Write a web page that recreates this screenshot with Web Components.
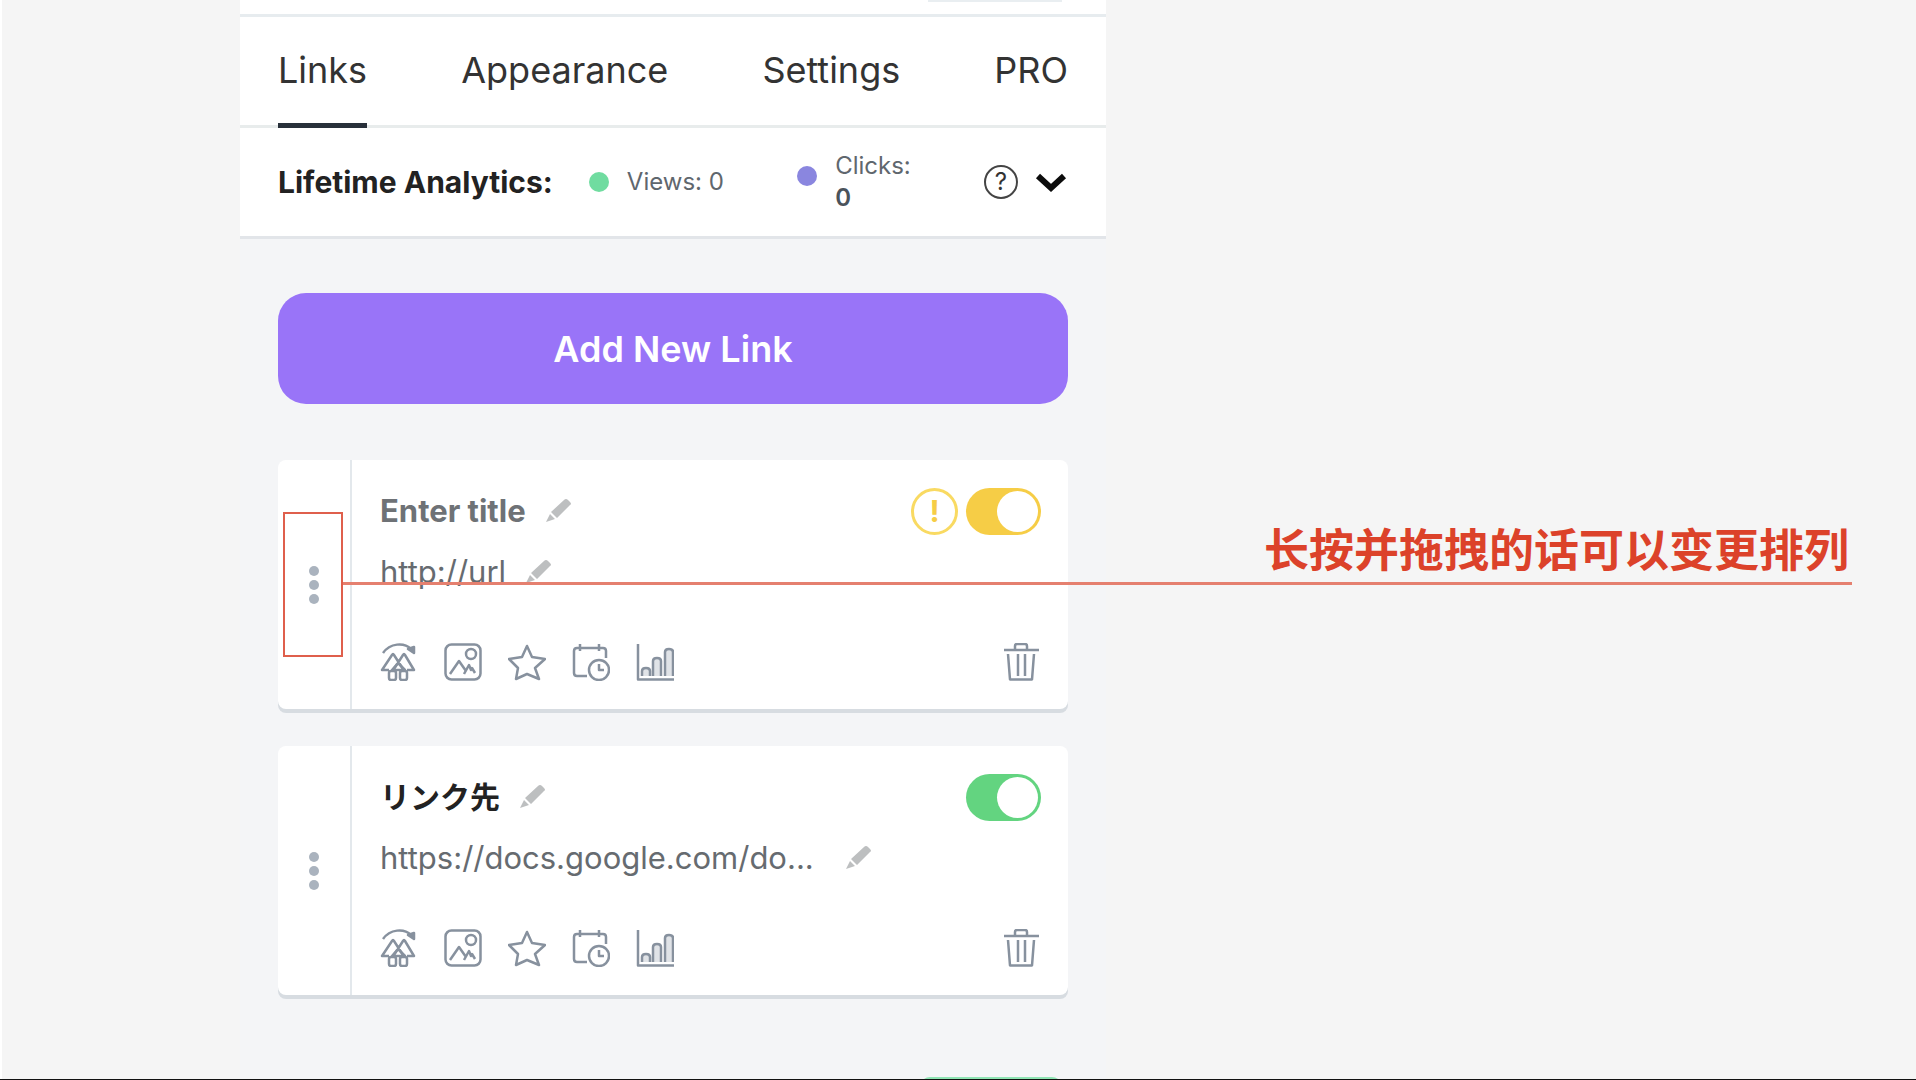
<!DOCTYPE html>
<html lang="zh">
<head>
<meta charset="UTF-8">
<title>Links</title>
<style>
    body {
        margin: 0;
        background: #f5f5f5;
        font-family: Inter, "Noto Sans CJK JP", sans-serif;
    }
</style>
</head>
<body>
<links-page>
    <tab-bar slot="header"></tab-bar>
    <analytics-bar slot="header"></analytics-bar>
    <add-button>Add New Link</add-button>
    <link-card state="warning">
        <span slot="title">Enter title</span>
        <span slot="url">http://url</span>
    </link-card>
    <link-card state="active">
        <span slot="title" lang="ja">リンク先</span>
        <span slot="url">https://docs.google.com/do...</span>
    </link-card>
    <drag-hint slot="hint">长按并拖拽的话可以变更排列</drag-hint>
</links-page>

<script>
const icons = {
    tree: `<path d="M3 10C10 0 24-1 31 6"/><path d="M28 6l6-2v6z" fill="currentColor"/><path d="M9 27H2L12 12q1-2 2 0l9 14M27 27h7L25 12q-1-2-2 0l-9 14"/><path d="M18 20l-6 7h13z"/><rect x="9" y="28" width="7" height="9" rx="2"/><rect x="20" y="28" width="7" height="9" rx="2"/>`,
    image: `<rect x="1.5" y="1.5" width="35" height="35" rx="6"/><circle cx="27" cy="11" r="5"/><path d="M6 31l9-13 7 10M20 31l5-9 2 5 1-2 3 5"/>`,
    star: `<path d="M19 3l5 11 13 2-10 9 4 11-12-5-11 5 2-11-9-9 13-2z"/>`,
    schedule: `<path d="M15 33H5q-3 0-3-3V8q0-3 3-3h26q3 0 3 3v7M8 1v7M27 1v7"/><circle cx="27" cy="27" r="10"/><path d="M27 21v6h5"/>`,
    chart: `<path d="M2 1v35.5h36"/><g fill="#e0e3e7"><path d="M6 33v-5q0-3 4-3t4 3v5M17 33V18q0-3 4-3t4 3v15M29 33V9q0-3 4-3t4 3v24"/></g>`,
    trash: `<path d="M1 7h35M12 7V3q0-2 2-2h8q2 0 2 2v4M5 11l2 25.5h22l2-25.5M15 11v22M22 11v22"/>`
};

function icon(name) {
    return `<svg width="38" height="38" viewBox="0 0 38 38" fill="none" stroke="currentColor" stroke-width="2.5" stroke-linejoin="round" aria-hidden="true">${icons[name]}</svg>`;
}

class LinksPage extends HTMLElement {
    constructor() {
        super();
        this.attachShadow({ mode: "open" });
        this.shadowRoot.innerHTML = `
            <style>
                :host {
                    display: grid;
                    grid-template-columns: 240fr 866fr 810fr;
                    box-sizing: border-box;
                    height: 100vh;
                    overflow: hidden;
                    position: relative;
                    box-shadow: inset 2px 0 0 #fff;
                    border-bottom: 1px solid #111;
                }
                .panel {
                    grid-column: 2;
                    background: #f4f5f7;
                }
                header { background: #fff; }
                .share {
                    height: 14px;
                    padding: 0 44px;
                    border-bottom: 3px solid #e7ecef;
                }
                .share::after {
                    content: "";
                    display: block;
                    width: 134px;
                    height: 2px;
                    margin-left: auto;
                    background: #e9eef1;
                }
                main {
                    display: flex;
                    flex-direction: column;
                    padding: 54px 38px 0;
                }
                .next {
                    align-self: flex-end;
                    width: 142px;
                    height: 48px;
                    margin: 82px 6px 0 0;
                    border-radius: 10px;
                    background: #8fe5b4;
                }
            </style>
            <div class="panel">
                <header>
                    <div class="share"></div>
                    <slot name="header"></slot>
                </header>
                <main>
                    <slot></slot>
                    <div class="next"></div>
                </main>
            </div>
            <slot name="hint"></slot>
        `;
    }
}

class TabBar extends HTMLElement {
    constructor() {
        super();
        this.attachShadow({ mode: "open" });
        this.shadowRoot.innerHTML = `
            <style>
                :host { display: block; }
                nav {
                    display: flex;
                    justify-content: space-between;
                    padding: 0 38px;
                    border-bottom: 3px solid #e8ecec;
                }
                a {
                    margin-bottom: -3px;
                    border-bottom: 5px solid transparent;
                    color: #333;
                    font-size: 36px;
                    line-height: 106px;
                    text-decoration: none;
                }
                a[aria-current] { border-color: #28303a; }
            </style>
            <nav>
                <a href="#links" aria-current="page">Links</a>
                <a href="#appearance">Appearance</a>
                <a href="#settings">Settings</a>
                <a href="#pro">PRO</a>
            </nav>
        `;
    }
}

class AnalyticsBar extends HTMLElement {
    constructor() {
        super();
        this.attachShadow({ mode: "open" });
        this.shadowRoot.innerHTML = `
            <style>
                :host {
                    display: flex;
                    align-items: center;
                    justify-content: space-between;
                    height: 108px;
                    padding: 0 38px;
                    border-bottom: 3px solid #e2e5e9;
                    color: #5f676e;
                    font-size: 24px;
                    line-height: 32px;
                }
                .group, .stat, .tools {
                    display: flex;
                    align-items: center;
                }
                .group { gap: 36px; }
                .stat { gap: 18px; }
                .tools { gap: 16px; }
                h2 {
                    margin: 0;
                    color: #222;
                    font-size: 30px;
                    font-weight: 700;
                }
                .dot {
                    width: 20px;
                    height: 20px;
                    border-radius: 50%;
                    background: #70dca0;
                }
                .clicks .dot {
                    margin-bottom: 12px;
                    background: #8a86df;
                }
                b {
                    display: block;
                    color: #4a535b;
                    font-weight: 600;
                }
                button {
                    display: flex;
                    padding: 0;
                    border: 0;
                    background: none;
                    color: #333;
                    font: inherit;
                }
                .help {
                    box-sizing: border-box;
                    justify-content: center;
                    width: 34px;
                    height: 34px;
                    border: 2px solid #444;
                    border-radius: 50%;
                    line-height: 30px;
                }
            </style>
            <div class="group">
                <h2>Lifetime Analytics:</h2>
                <div class="stat"><span class="dot"></span><span>Views: 0</span></div>
            </div>
            <div class="stat clicks"><span class="dot"></span><span>Clicks: <b>0</b></span></div>
            <div class="tools">
                <button class="help" aria-label="Help">?</button>
                <button aria-label="Expand analytics">
                    <svg width="34" height="22" viewBox="0 0 34 22" fill="none" stroke="#0c0c0c" stroke-width="6"><path d="M4 5l13 12L30 5"/></svg>
                </button>
            </div>
        `;
    }
}

class AddButton extends HTMLElement {
    constructor() {
        super();
        this.attachShadow({ mode: "open" });
        this.shadowRoot.innerHTML = `
            <style>
                :host { display: block; }
                button {
                    width: 100%;
                    height: 111px;
                    border: 0;
                    border-radius: 28px;
                    background: #9974f8;
                    color: #fff;
                    font: 600 36px/40px Inter, sans-serif;
                }
            </style>
            <button><slot></slot></button>
        `;
    }
}

class EditButton extends HTMLElement {
    constructor() {
        super();
        this.attachShadow({ mode: "open" });
        this.shadowRoot.innerHTML = `
            <style>
                :host { display: block; }
                button {
                    display: flex;
                    padding: 0;
                    border: 0;
                    background: none;
                    color: #bdbfc0;
                }
            </style>
            <button aria-label="Edit">
                <svg width="26" height="26" viewBox="0 0 26 26" fill="currentColor"><path d="M5 14L18 2q2-2 4 0l2 2q2 2 0 3L11 20zM4 16l5 5-9 3z"/></svg>
            </button>
        `;
    }
}

class LinkCard extends HTMLElement {
    constructor() {
        super();
        this.attachShadow({ mode: "open" });
        this.shadowRoot.innerHTML = `
            <style>
                :host {
                    --accent: #63d480;
                    display: flex;
                    margin-top: 56px;
                    border-radius: 8px;
                    background: #fff;
                    box-shadow: 0 4px 0 #d7dce1;
                    color: #222;
                }
                :host([state="warning"]) {
                    --accent: #f6cd46;
                    color: #6e7276;
                }
                :host([state="active"]) { margin-top: 37px; }
                :host([state="active"]) .alert { display: none; }
                :host([state="active"]) .url { gap: 32px; }
                button {
                    display: flex;
                    padding: 0;
                    border: 0;
                    background: none;
                    color: #87919e;
                }
                .handle {
                    flex-direction: column;
                    align-items: center;
                    justify-content: center;
                    gap: 4px;
                    width: 74px;
                    border-right: 2px solid #e3e8ec;
                }
                .handle i {
                    width: 10px;
                    height: 10px;
                    border-radius: 50%;
                    background: #aab3be;
                }
                .body {
                    flex: 1;
                    padding: 27px 27px 28px 28px;
                }
                .row {
                    display: flex;
                    align-items: center;
                    gap: 20px;
                }
                .title { height: 48px; }
                h3 {
                    margin: 0;
                    font-size: 31px;
                    font-weight: 700;
                    line-height: 40px;
                }
                ::slotted([lang="ja"]) { font-size: 30px; }
                .controls {
                    display: flex;
                    gap: 8px;
                    margin-left: auto;
                }
                .alert {
                    box-sizing: border-box;
                    width: 47px;
                    height: 47px;
                    border: 3px solid #f9da62;
                    border-radius: 50%;
                    color: #f6cd46;
                    font-size: 30px;
                    font-weight: 700;
                    line-height: 40px;
                    text-align: center;
                }
                input {
                    appearance: none;
                    display: flex;
                    justify-content: flex-end;
                    box-sizing: border-box;
                    width: 75px;
                    height: 47px;
                    margin: 0;
                    padding: 3px;
                    border-radius: 24px;
                    background: var(--accent);
                }
                input::before {
                    content: "";
                    width: 41px;
                    height: 41px;
                    border-radius: 50%;
                    background: #fff;
                }
                .url {
                    height: 34px;
                    margin: 20px 0 54px;
                    color: #666b70;
                    font-size: 31px;
                    line-height: 34px;
                }
                .tools { gap: 26px; }
                .trash { margin-left: auto; }
            </style>
            <button class="handle" aria-label="Reorder"><i></i><i></i><i></i></button>
            <div class="body">
                <div class="row title">
                    <h3><slot name="title"></slot></h3>
                    <edit-button></edit-button>
                    <div class="controls">
                        <span class="alert">!</span>
                        <input type="checkbox" role="switch" aria-label="Link enabled" checked>
                    </div>
                </div>
                <div class="row url">
                    <slot name="url"></slot>
                    <edit-button></edit-button>
                </div>
                <div class="row tools">
                    <button aria-label="Redirect">${icon("tree")}</button>
                    <button aria-label="Thumbnail">${icon("image")}</button>
                    <button aria-label="Priority">${icon("star")}</button>
                    <button aria-label="Schedule">${icon("schedule")}</button>
                    <button aria-label="Statistics">${icon("chart")}</button>
                    <button class="trash" aria-label="Delete">${icon("trash")}</button>
                </div>
            </div>
        `;
    }
}

// Red frame round the first card's drag handle, with its note on a leader line
class DragHint extends HTMLElement {
    constructor() {
        super();
        this.attachShadow({ mode: "open" });
        this.shadowRoot.innerHTML = `
            <style>
                :host {
                    position: absolute;
                    top: 512px;
                    left: calc(100% * 240 / 1916 + 43px);
                    right: 64px;
                    display: flex;
                    align-items: flex-start;
                    pointer-events: none;
                }
                .frame {
                    box-sizing: border-box;
                    width: 60px;
                    height: 145px;
                    border: 2px solid #df5f4c;
                }
                p {
                    flex: 1;
                    margin: 0;
                    padding: 12px 3px 10px 0;
                    border-bottom: 3px solid #e5806f;
                    color: #dc422a;
                    font: 700 45px/48px "Noto Sans CJK SC", sans-serif;
                    text-align: right;
                }
            </style>
            <div class="frame"></div>
            <p><slot></slot></p>
        `;
    }
}

customElements.define("edit-button", EditButton);
customElements.define("links-page", LinksPage);
customElements.define("tab-bar", TabBar);
customElements.define("analytics-bar", AnalyticsBar);
customElements.define("add-button", AddButton);
customElements.define("link-card", LinkCard);
customElements.define("drag-hint", DragHint);
</script>
</body>
</html>
